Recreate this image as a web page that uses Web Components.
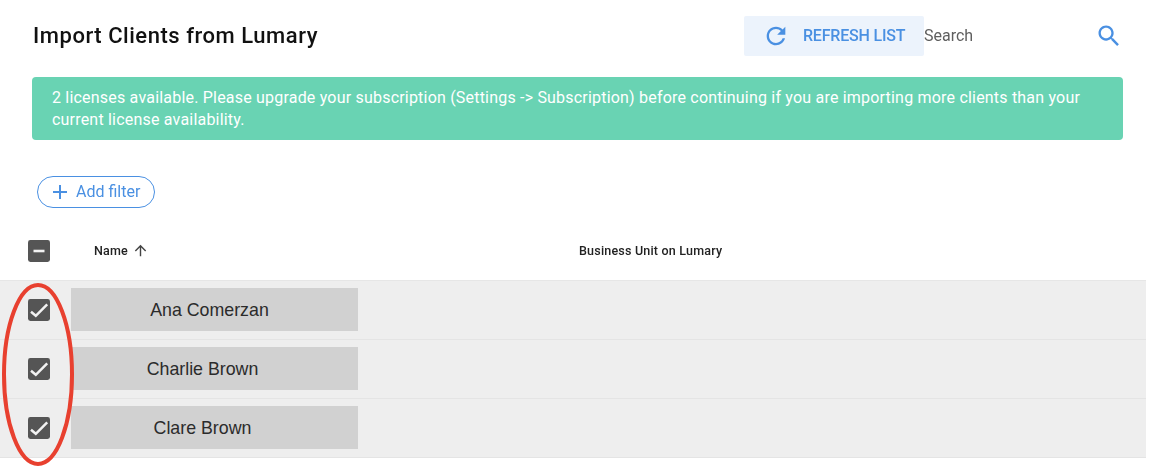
<!DOCTYPE html>
<html lang="en">
<head>
<meta charset="utf-8">
<title>Import Clients from Lumary</title>
<style>
    html, body { margin: 0; padding: 0; background: #fff; font-family: Roboto, "Liberation Sans", sans-serif; }
    body { width: 1156px; height: 474px; overflow: hidden; }
</style>
</head>
<body>
<import-page>
    <page-header title-text="Import Clients from Lumary"></page-header>
    <license-banner>2 licenses available. Please upgrade your subscription (Settings -&gt; Subscription) before continuing if you are importing more clients than your current license availability.</license-banner>
    <filter-button>Add filter</filter-button>
    <client-table>
        <client-row shift="10">Ana Comerzan</client-row>
        <client-row shift="24">Charlie Brown</client-row>
        <client-row shift="24">Clare Brown</client-row>
    </client-table>
</import-page>

<script>
const BLUE = '#4a90e2';

class ImportPage extends HTMLElement {
    constructor() {
        super();
        this.attachShadow({ mode: 'open' });
        this.shadowRoot.innerHTML = `
            <style>
                /* la captura original viene algo desenfocada */
                :host { display: flex; flex-direction: column; filter: blur(.4px); }
            </style>
            <slot></slot>
        `;
    }
}

class PageHeader extends HTMLElement {
    constructor() {
        super();
        this.attachShadow({ mode: 'open' });
        this.shadowRoot.innerHTML = `
            <style>
                :host { display: flex; align-items: center; height: 40px; padding: 16px 33px 21px 33px; }
                h1 { margin: 0 0 2px; flex: 1; font: 500 22px Roboto, sans-serif; letter-spacing: .54px; color: #111; }
                button {
                    display: flex; align-items: center; width: 180px; height: 40px; padding: 0 0 1px 18px;
                    box-sizing: border-box; border: 0; border-radius: 2px; background: #ecf3fc; color: ${BLUE};
                    font: 500 16px Roboto, sans-serif; letter-spacing: -.2px;
                }
                button svg { width: 28px; height: 28px; margin-right: 13px; flex: none; }
                .search { display: flex; align-items: center; justify-content: space-between; width: 199px; color: #5f5f5f; font: 400 16px Roboto, sans-serif; }
                .search span { padding-bottom: 2px; }
                .search svg { width: 28px; height: 28px; margin-bottom: 1px; }
            </style>
            <h1>${this.getAttribute('title-text')}</h1>
            <button>
                <svg viewBox="0 0 24 24" fill="${BLUE}"><path d="M17.65 6.35C16.2 4.9 14.21 4 12 4c-4.42 0-7.99 3.58-7.99 8s3.57 8 7.99 8c3.73 0 6.84-2.55 7.73-6h-2.08c-.82 2.33-3.04 4-5.65 4-3.31 0-6-2.69-6-6s2.69-6 6-6c1.66 0 3.14.69 4.22 1.78L13 11h7V4l-2.35 2.35z"/></svg>
                REFRESH LIST
            </button>
            <div class="search">
                <span>Search</span>
                <svg viewBox="0 0 24 24" fill="${BLUE}"><path d="M15.5 14h-.79l-.28-.27C15.41 12.59 16 11.11 16 9.5 16 5.91 13.09 3 9.5 3S3 5.91 3 9.5 5.91 16 9.5 16c1.61 0 3.09-.59 4.23-1.57l.27.28v.79l5 4.99L20.49 19l-4.99-5zm-6 0C7.01 14 5 11.99 5 9.5S7.01 5 9.5 5 14 7.01 14 9.5 11.99 14 9.5 14z"/></svg>
            </div>
        `;
    }
}

class LicenseBanner extends HTMLElement {
    constructor() {
        super();
        this.attachShadow({ mode: 'open' });
        this.shadowRoot.innerHTML = `
            <style>
                :host {
                    display: block; box-sizing: border-box; width: 1091px; height: 63px; margin-left: 32px;
                    padding: 10px 20px 8px; background: #69d3b3; border-radius: 4px; color: #fff;
                    font: 400 16px/22px Roboto, sans-serif; letter-spacing: .2px;
                }
            </style>
            <slot></slot>
        `;
    }
}

class FilterButton extends HTMLElement {
    constructor() {
        super();
        this.attachShadow({ mode: 'open' });
        this.shadowRoot.innerHTML = `
            <style>
                :host {
                    display: flex; align-items: center; align-self: flex-start; box-sizing: border-box;
                    width: 118px; height: 32px; margin: 36px 0 0 37px; padding: 0 0 1px 10px;
                    border: 1px solid ${BLUE}; border-radius: 16px; color: ${BLUE};
                    font: 400 16px Roboto, sans-serif;
                }
                svg { width: 24px; height: 24px; margin-right: 4px; }
            </style>
            <svg viewBox="0 0 24 24" fill="${BLUE}"><path d="M19 13h-6v6h-2v-6H5v-2h6V5h2v6h6v2z"/></svg>
            <slot></slot>
        `;
    }
}

class CheckMark extends HTMLElement {
    constructor() {
        super();
        this.attachShadow({ mode: 'open' });
        const mark = this.hasAttribute('indeterminate')
            ? '<path d="M5.5 11h11" stroke-width="2.6"/>'
            : '<path d="M3 12.8l4.8 4L19.2 5.4" stroke-width="2.5"/>';
        this.shadowRoot.innerHTML = `
            <style>
                :host { display: block; width: 22px; height: 22px; flex: none; }
                svg { display: block; width: 22px; height: 22px; }
            </style>
            <svg viewBox="0 0 22 22">
                <rect width="22" height="22" rx="2.4" fill="#555"/>
                <g fill="none" stroke="#f2f2f2">${mark}</g>
            </svg>
        `;
    }
}

class ClientTable extends HTMLElement {
    constructor() {
        super();
        this.attachShadow({ mode: 'open' });
        this.shadowRoot.innerHTML = `
            <style>
                :host { display: block; position: relative; width: 1146px; margin-top: 16px; }
                .head {
                    display: flex; align-items: center; box-sizing: border-box; height: 57px;
                    padding: 3px 0 5px 28px; border-bottom: 1px solid #e6e6e6;
                    font: 500 12.5px Roboto, sans-serif; letter-spacing: .2px; color: #222;
                }
                .name { display: flex; align-items: center; width: 485px; margin-left: 44px; padding-bottom: 2px; }
                .name svg { width: 17px; height: 17px; margin-left: 4px; }
                .unit { padding-bottom: 2px; }
                .oval { position: absolute; left: 2px; top: 59px; width: 72px; height: 183px; overflow: visible; }
            </style>
            <div class="head">
                <check-mark indeterminate></check-mark>
                <div class="name">Name
                    <svg viewBox="0 0 24 24" fill="#444"><path d="M4 12l1.41 1.41L11 7.83V20h2V7.83l5.58 5.59L20 12l-8-8-8 8z"/></svg>
                </div>
                <div class="unit">Business Unit on Lumary</div>
            </div>
            <slot></slot>
            <svg class="oval" viewBox="0 0 72 183"><ellipse cx="36" cy="91.5" rx="34" ry="89.5" fill="none" stroke="#e8402f" stroke-width="4"/></svg>
        `;
    }
}

class ClientRow extends HTMLElement {
    constructor() {
        super();
        this.attachShadow({ mode: 'open' });
        this.shadowRoot.innerHTML = `
            <style>
                :host {
                    display: flex; align-items: center; box-sizing: border-box; height: 59px;
                    padding: 0 0 1px 28px; background: #eeeeee; border-bottom: 1px solid #e4e4e4;
                }
                .cell {
                    display: flex; align-items: center; justify-content: center; box-sizing: border-box;
                    width: 287px; height: 43px; margin-left: 21px; padding: 2px ${this.getAttribute('shift')}px 0 0;
                    background: #d1d1d1; color: #2b2b2b; font: 400 17.8px "Liberation Sans", sans-serif;
                }
            </style>
            <check-mark></check-mark>
            <div class="cell"><slot></slot></div>
        `;
    }
}

customElements.define('import-page', ImportPage);
customElements.define('page-header', PageHeader);
customElements.define('license-banner', LicenseBanner);
customElements.define('filter-button', FilterButton);
customElements.define('check-mark', CheckMark);
customElements.define('client-table', ClientTable);
customElements.define('client-row', ClientRow);
</script>
</body>
</html>
